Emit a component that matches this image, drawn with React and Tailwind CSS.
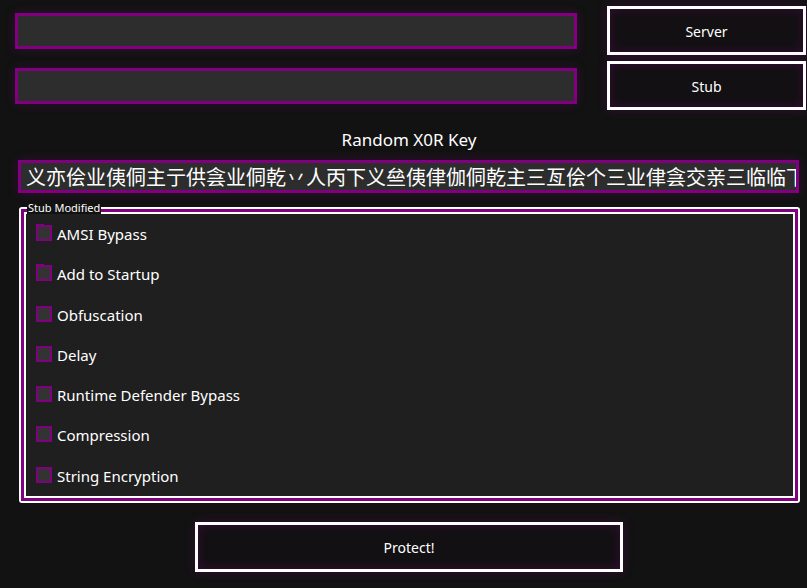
import React, { useState } from 'react';

const options = [
  'AMSI Bypass',
  'Add to Startup',
  'Obfuscation',
  'Delay',
  'Runtime Defender Bypass',
  'Compression',
  'String Encryption',
];

const KEY = '义亦侩业侇侗主亍供侌业侗乾丷人丙下义亝侇侓伽侗乾主三亙侩个三业侓侌交亲三临临下';

const font = { fontFamily: '"Segoe UI", "Noto Sans", sans-serif' };

const PathBox = () => (
  <div className="h-[36px] w-[562px] border-[3px] border-[#800080] bg-[#2d2d2d] shadow-[0_0_10px_rgba(128,0,128,0.3)]" />
);

const GlowButton = ({ children, className = '' }) => (
  <button
    className={`flex items-center justify-center border-[3px] border-white bg-[#131013] text-[14px] text-white shadow-[0_0_10px_rgba(128,0,128,0.3),inset_0_0_10px_rgba(128,0,128,0.35)] ${className}`}
  >
    {children}
  </button>
);

const Check = ({ label, tab }) => {
  const [on, setOn] = useState(false);
  return (
    <label className="flex h-[40.3px] cursor-pointer items-start gap-[5px]">
      <span className="relative block h-[16px] w-[16px] shrink-0 border-2 border-[#800080] bg-[#333333]" onClick={() => setOn(!on)}>
        {tab && <span className="absolute -top-[3px] -left-[2px] h-[2px] w-[8px] bg-[#800080]" />}
        {on && <span className="absolute inset-[2px] bg-[#800080]" />}
      </span>
      <span className="-mt-[1px] text-[15px] leading-[20px] text-white">{label}</span>
    </label>
  );
};

export default function App() {
  return (
    <div className="h-[588px] w-[807px] overflow-hidden bg-[#121212]" style={font}>
      <div className="flex flex-col gap-[6px] pt-[6px]">
        <div className="flex h-[49px] items-center">
          <div className="ml-[15px]"><PathBox /></div>
          <GlowButton className="ml-[30px] h-[49px] w-[199px] pt-[2px]">Server</GlowButton>
        </div>
        <div className="flex h-[49px] items-center">
          <div className="ml-[15px]"><PathBox /></div>
          <GlowButton className="ml-[30px] h-[49px] w-[199px] pt-[2px]">Stub</GlowButton>
        </div>
      </div>

      <div className="mt-[18px] pl-[11px] text-center text-[17px] leading-[24px] text-white">Random X0R Key</div>

      <div className="ml-[18px] mt-[8px] flex h-[33px] w-[781px] items-center overflow-hidden border-[3px] border-[#800080] bg-[#2d2d2d] shadow-[0_0_10px_rgba(128,0,128,0.3)]">
        <span
          className="whitespace-nowrap pl-[5px] text-[20px] leading-[26px] text-white"
          style={{ fontFamily: '"Noto Sans CJK SC", sans-serif' }}
        >
          {KEY}
        </span>
      </div>

      {/* group box: white / purple / white frame */}
      <div className="relative ml-[19px] mt-[14px] h-[296px] w-[781px] rounded-[3px] border-2 border-white">
        <div className="h-full w-full border-[3px] border-[#800080]">
          <div className="h-full w-full border-2 border-white bg-[#1f1f1f] pl-[10px] pt-[11px]">
            {options.map((o, i) => (
              <Check key={o} label={o} tab={i < 2} />
            ))}
          </div>
        </div>
        <span className="absolute -top-[8px] left-[6px] bg-[#121212] px-[1px] text-[11px] leading-[13px] text-white">
          Stub Modified
        </span>
      </div>

      <GlowButton className="ml-[195px] mt-[19px] h-[50px] w-[428px]">Protect!</GlowButton>
    </div>
  );
}
